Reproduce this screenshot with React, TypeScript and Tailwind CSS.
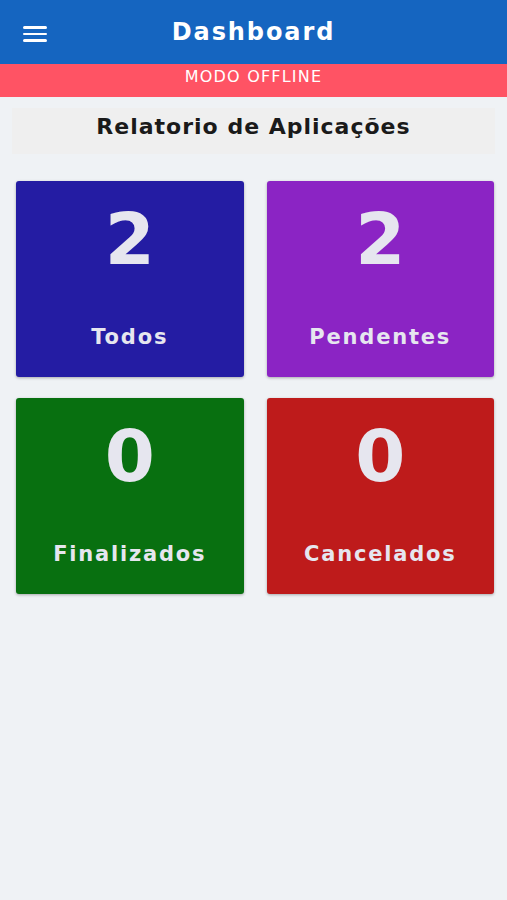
import React from "react";

const cards = [
  { n: "2", label: "Todos", bg: "bg-[#241ca3]" },
  { n: "2", label: "Pendentes", bg: "bg-[#8b24c4]" },
  { n: "0", label: "Finalizados", bg: "bg-[#087010]" },
  { n: "0", label: "Cancelados", bg: "bg-[#be1b1b]" },
];

export default function App() {
  return (
    <div className="min-h-[900px] w-full bg-[#eff2f5]" style={{ fontFamily: "'DejaVu Sans', sans-serif" }}>
      <header className="relative flex h-[64px] items-center justify-center bg-[#1565c0]">
        <div className="absolute left-[23px] top-[26px] flex w-[24px] flex-col gap-[4px]">
          <span className="h-[2.5px] w-full rounded bg-white" />
          <span className="h-[2.5px] w-full rounded bg-white" />
          <span className="h-[2.5px] w-full rounded bg-white" />
        </div>
        <h1 className="text-[24px] font-bold leading-none tracking-[1.9px] text-white">Dashboard</h1>
      </header>
      <div className="flex h-[33px] justify-center bg-[#ff5364] pt-[3px] text-[16px] leading-[20px] tracking-[1.2px] text-white">
        MODO OFFLINE
      </div>
      <div className="px-[12px] pt-[11px]">
        <div className="flex h-[46px] items-center justify-center bg-[#efefef] pb-[10px] text-[22px] font-bold tracking-[1px] text-[#1a1a1a]">
          Relatorio de Aplicações
        </div>
      </div>
      <div className="grid grid-cols-2 gap-x-[23px] gap-y-[21px] px-[16px] pt-[27px] pr-[13px]">
        {cards.map((c, i) => (
          <div
            key={i}
            className={`${c.bg} flex h-[196px] flex-col items-center rounded-[3px] text-[#e6e6ef] shadow-[0_1px_3px_rgba(0,0,0,0.3)]`}
          >
            <div className="mt-[20px] text-[72px] font-bold leading-[76px]">{c.n}</div>
            <div className="mt-[47px] text-[21px] font-bold leading-[26px] tracking-[1.8px]">{c.label}</div>
          </div>
        ))}
      </div>
    </div>
  );
}
